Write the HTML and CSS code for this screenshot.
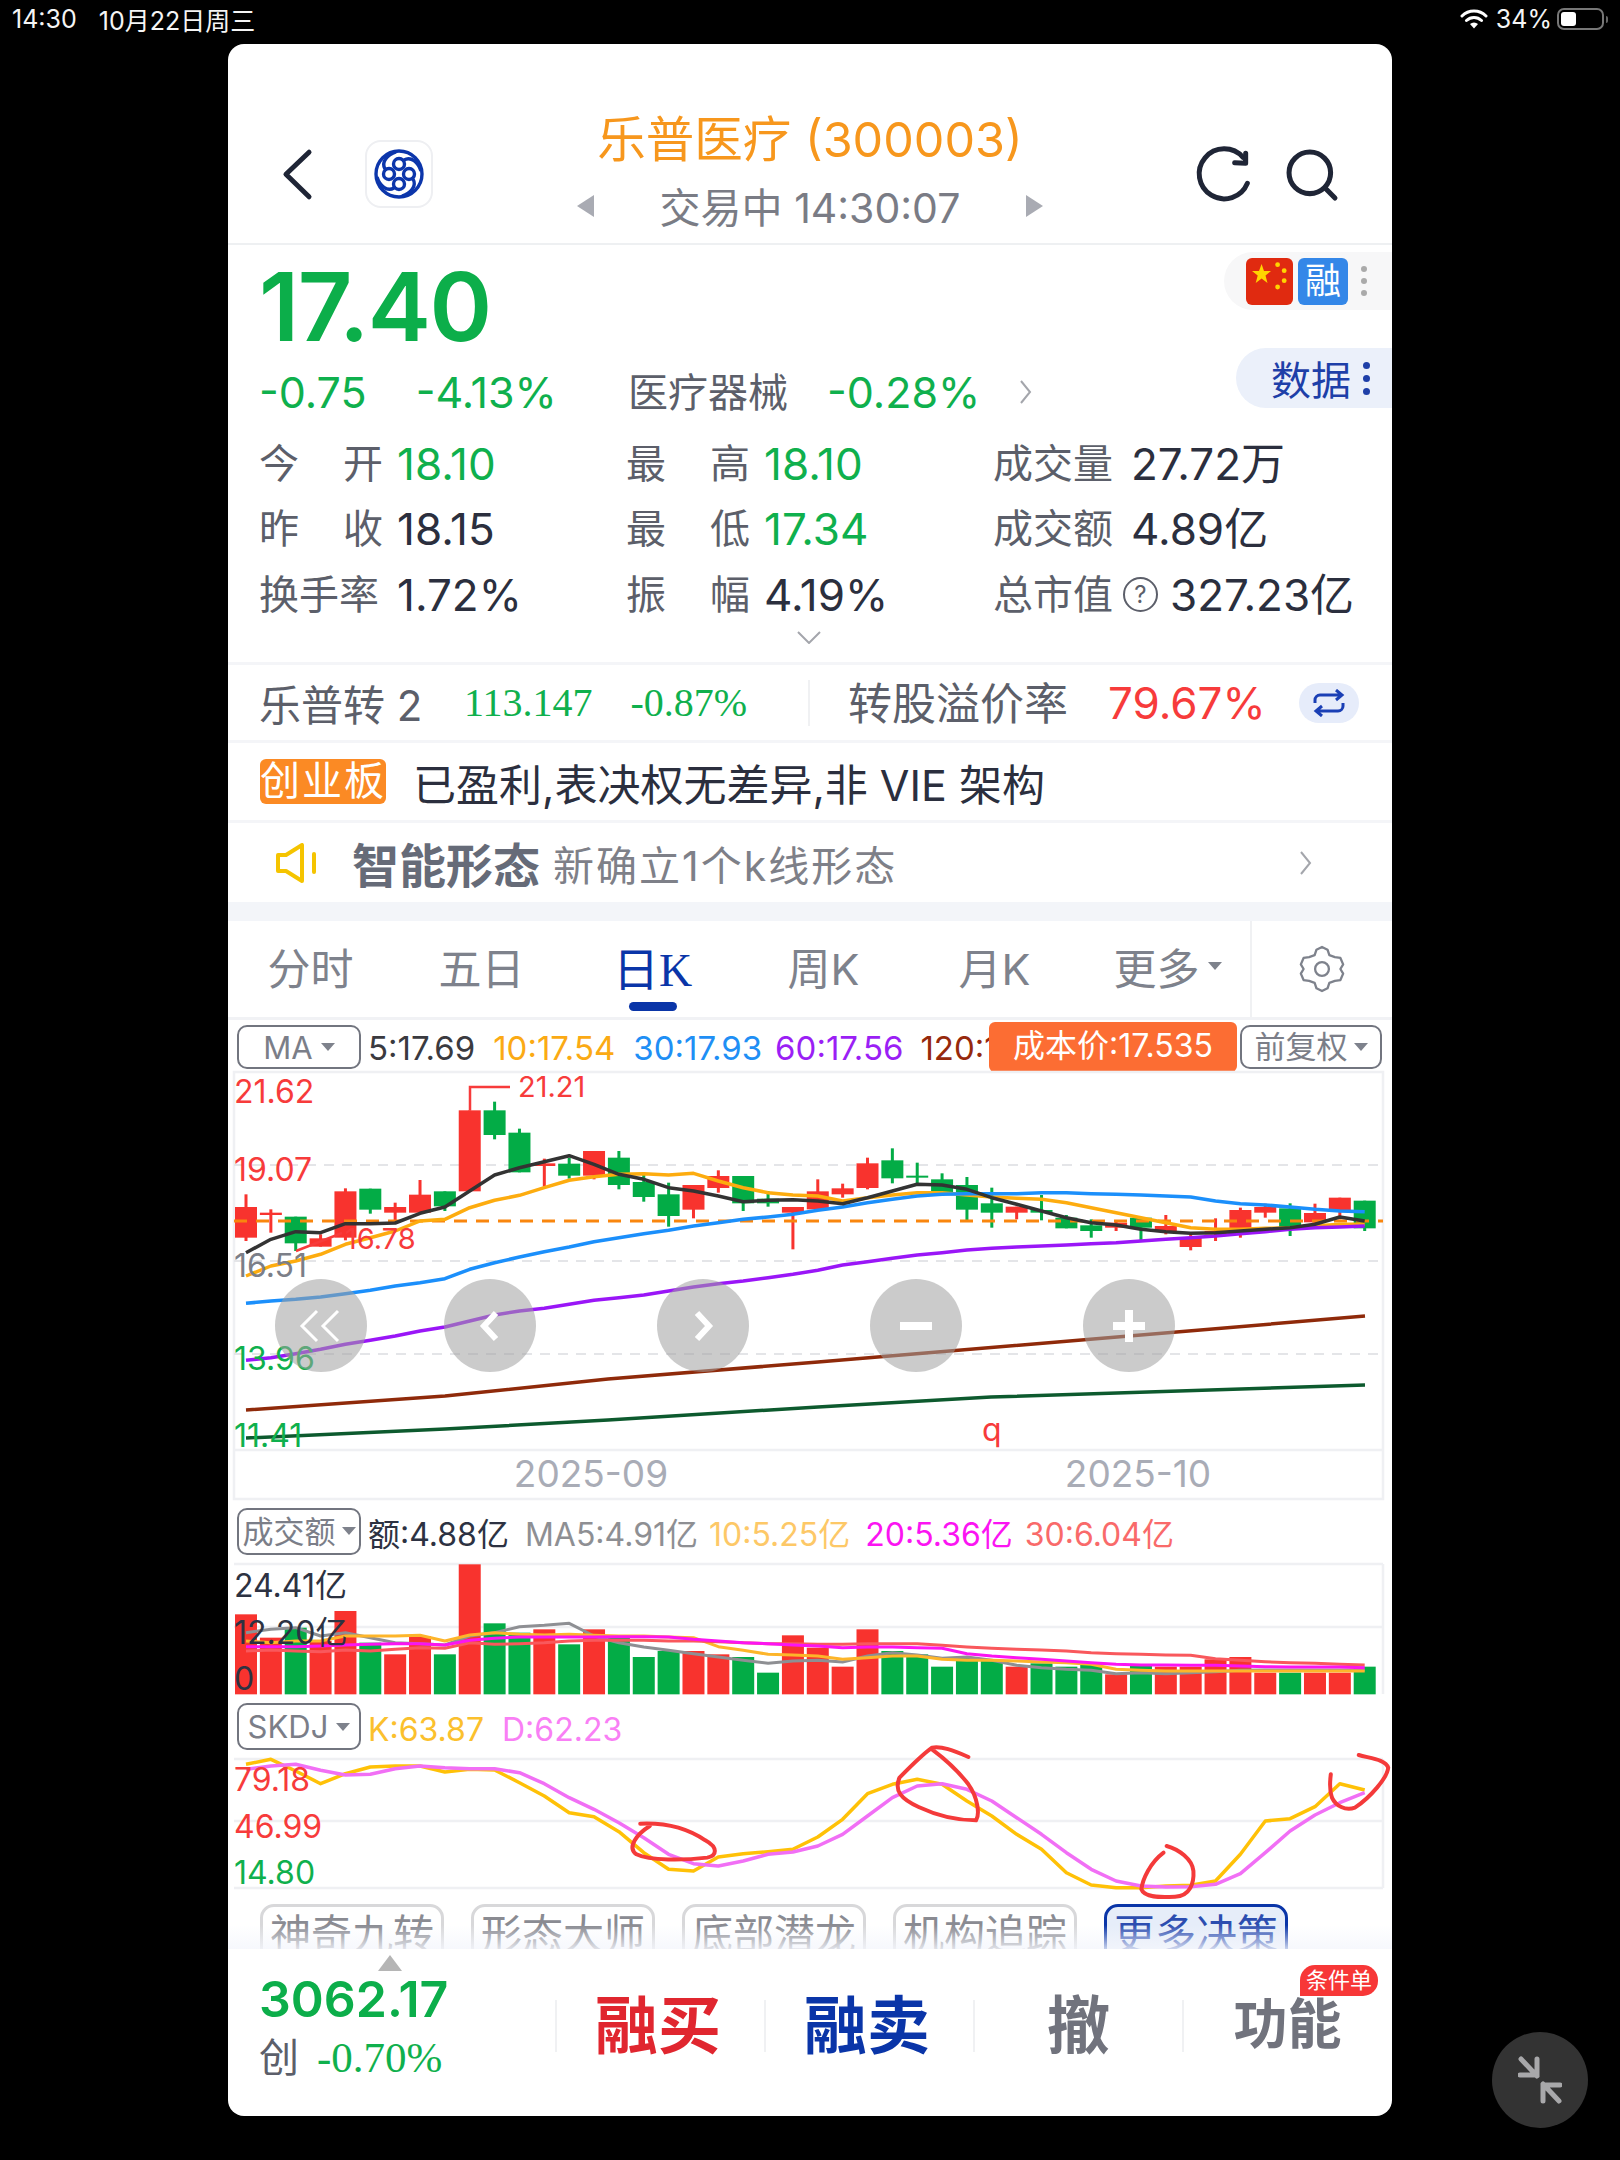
FILE: index.html
```html
<!DOCTYPE html>
<html lang="zh-CN">
	<head>
		<meta charset="utf-8">
		<title>乐普医疗 (300003)</title>
		<link rel="stylesheet" href="styles.css">
	</head>

	<body>
		<div class="status">
			<span class="status-time">14:30</span>
			<span class="status-date">10月22日周三</span>
			<span class="status-right">
				<svg class="wifi" viewBox="0 0 28 20" width="28" height="20">
					<path d="M2 7a17 17 0 0 1 24 0M6.5 11.5a11 11 0 0 1 15 0" fill="none" stroke="#fff" stroke-width="3" stroke-linecap="round"/>
					<path d="M10 15a6 6 0 0 1 8 0l-4 4.500z" fill="#fff"/>
				</svg>
				<span>34%</span>
				<span class="battery"><span class="battery-level"></span></span>
				<span class="battery-nub"></span>
			</span>
		</div>

		<div class="card">
			<div class="header">
				<div class="header-left">
					<svg viewBox="30 50 100 165" width="33" height="55">
						<path d="M118 65L48 132L118 200" fill="none" stroke="#1f2536" stroke-width="15" stroke-linecap="round" stroke-linejoin="round"/>
					</svg>
					<div class="logo">
						<svg viewBox="-26 -26 52 52" width="52" height="52">
							<g fill="none" stroke="#0c36ab" stroke-width="3.400">
								<circle r="23"/>
								<circle cy="-10" r="5.500"/>
								<circle cy="10" r="5.500"/>
								<circle cx="-10" r="5.500"/>
								<circle cx="10" r="5.500"/>
								<path d="M5 -14C12 -18 19 -12 22 -3"/>
								<path d="M14 5C18 12 12 19 3 22"/>
								<path d="M-5 14C-12 18 -19 12 -22 3"/>
								<path d="M-14 -5C-18 -12 -12 -19 -3 -22"/>
							</g>
						</svg>
					</div>
				</div>
				<div class="header-mid">
					<div class="title">乐普医疗 (300003)</div>
					<div class="sub">
						<span class="tri tri-left"></span>
						<span>交易中 14:30:07</span>
						<span class="tri tri-right"></span>
					</div>
				</div>
				<div class="header-right">
					<svg viewBox="40 40 180 180" width="60" height="60">
						<path d="M190 80A75 75 0 1 0 203 158" fill="none" stroke="#1f2536" stroke-width="15" stroke-linecap="round"/>
						<path d="M198 68V98L165 96" fill="none" stroke="#1f2536" stroke-width="15" stroke-linecap="round" stroke-linejoin="round"/>
					</svg>
					<svg viewBox="310 45 170 170" width="57" height="57">
						<circle cx="390" cy="125" r="62" fill="none" stroke="#1f2536" stroke-width="15"/>
						<path d="M437 172L465 200" stroke="#1f2536" stroke-width="15" stroke-linecap="round"/>
					</svg>
				</div>
			</div>

			<div class="quote">
				<div class="badges">
					<svg class="flag" viewBox="0 0 47 47" width="47" height="47">
						<rect width="47" height="47" rx="6" fill="#e02a10"/>
						<polygon points="15.600,6 18,13 25,13 19.500,17.500 21.500,25 15.600,20.500 9.700,25 11.700,17.500 6,13 13,13" fill="#ffd400"/>
						<circle cx="31.600" cy="6.700" r="2.400" fill="#ffd400"/>
						<circle cx="38.200" cy="12.700" r="2.400" fill="#ffd400"/>
						<circle cx="38.200" cy="22.700" r="2.400" fill="#ffd400"/>
						<circle cx="31.600" cy="29" r="2.400" fill="#ffd400"/>
					</svg>
					<span class="rong">融</span>
					<span class="dots"><i></i><i></i><i></i></span>
				</div>
				<div class="data-btn">数据<span class="dots dots-blue"><i></i><i></i><i></i></span></div>

				<div class="price">17.40</div>
				<div class="change">
					<div class="change-left">
						<span class="up">-0.75</span>
						<span class="up">-4.13%</span>
					</div>
					<span class="label">医疗器械</span>
					<span class="up">-0.28%</span>
					<svg viewBox="0 0 13 26" width="13" height="26">
						<path d="M2 2L11 13L2 24" fill="none" stroke="#a4a6ac" stroke-width="2"/>
					</svg>
				</div>

				<div class="stats">
					<div class="stat"><span class="stat-name"><b>今</b><b>开</b></span><span class="up">18.10</span></div>
					<div class="stat"><span class="stat-name"><b>最</b><b>高</b></span><span class="up">18.10</span></div>
					<div class="stat"><span class="stat-name"><b>成交量</b></span><span>27.72万</span></div>
					<div class="stat"><span class="stat-name"><b>昨</b><b>收</b></span><span>18.15</span></div>
					<div class="stat"><span class="stat-name"><b>最</b><b>低</b></span><span class="up">17.34</span></div>
					<div class="stat"><span class="stat-name"><b>成交额</b></span><span>4.89亿</span></div>
					<div class="stat"><span class="stat-name"><b>换手率</b></span><span>1.72%</span></div>
					<div class="stat"><span class="stat-name"><b>振</b><b>幅</b></span><span>4.19%</span></div>
					<div class="stat"><span class="stat-name"><b>总市值</b></span><span class="help">?</span><span>327.23亿</span></div>
				</div>
				<svg class="more" viewBox="0 0 24 13" width="24" height="13">
					<path d="M1 1L12 12L23 1" fill="none" stroke="#a4a6ac" stroke-width="2"/>
				</svg>
			</div>

			<div class="row bond">
				<div class="bond-left">
					<span class="bond-name">乐普转 2</span>
					<span class="serif up">113.147</span>
					<span class="serif up">-0.87%</span>
				</div>
				<div class="bond-right">
					<span class="bond-rate">转股溢价率</span>
					<span class="down">79.67%</span>
					<span class="sync">
						<svg viewBox="0 0 36 28" width="36" height="28">
							<path d="M4 14V11a5 5 0 0 1 5-5H30M25 1L31 6L25 11M32 14V17a5 5 0 0 1-5 5H6M11 17L5 22L11 27" fill="none" stroke="#1a3fb5" stroke-width="3"/>
						</svg>
					</span>
				</div>
			</div>

			<div class="row tagline">
				<span class="tag">创业板</span>
				<span>已盈利,表决权无差异,非 VIE 架构</span>
			</div>

			<div class="row smart">
				<svg viewBox="0 0 42 40" width="42" height="40">
					<path d="M3 12H11L27 2V38L11 28H3z" fill="none" stroke="#f5c400" stroke-width="4" stroke-linejoin="round"/>
					<path d="M39 11V29" stroke="#f5c400" stroke-width="4" stroke-linecap="round"/>
				</svg>
				<span class="smart-title">智能形态</span>
				<span class="smart-text">新确立1个k线形态</span>
				<svg class="smart-arrow" viewBox="0 0 13 26" width="13" height="26">
					<path d="M2 2L11 13L2 24" fill="none" stroke="#a4a6ac" stroke-width="2"/>
				</svg>
			</div>

			<div class="band"></div>

			<div class="tabs">
				<span class="tab">分时</span>
				<span class="tab">五日</span>
				<span class="tab tab-on">日K</span>
				<span class="tab">周K</span>
				<span class="tab">月K</span>
				<span class="tab tab-more">更多<i class="caret"></i></span>
				<span class="gear">
					<svg viewBox="-25 -26 50 52" width="46" height="48">
						<path d="M-6 -21L0 -24L6 -21L8 -15L14 -13L20 -12L23 -5L20 0L23 5L20 12L14 13L8 15L6 21L0 24L-6 21L-8 15L-14 13L-20 12L-23 5L-20 0L-23 -5L-20 -12L-14 -13L-8 -15z" fill="none" stroke="#7e828c" stroke-width="2.500" stroke-linejoin="round"/>
						<circle r="7.500" fill="none" stroke="#7e828c" stroke-width="2.500"/>
					</svg>
				</span>
			</div>

			<div class="legend legend-main">
				<span class="select">MA<i class="caret"></i></span>
				<span class="ma5">5:17.69</span>
				<span class="ma10">10:17.54</span>
				<span class="ma30">30:17.93</span>
				<span class="ma60">60:17.56</span>
				<span class="ma120">120:1</span>
				<span class="cost">成本价:17.535</span>
				<span class="select select-cjk select-right">前复权<i class="caret"></i></span>
			</div>

			<div class="pane">
				<svg class="chart" viewBox="228 1071 1164 429" width="1164" height="429">
					<path class="frame" d="M234 1071H1383V1498H234zM234 1449H1383"/>
					<path class="grid" d="M234 1164H1383M234 1260H1383M234 1353H1383"/>
					<g id="candles"></g>
					<path class="cost-line" d="M234 1220H1383"/>
					<path class="mark" d="M470 1109V1086H510M296 1250L342 1232"/>
					<g id="ma-lines"></g>
					<polyline class="line" stroke="#8f2a0a" points="246,1409 445,1395 608,1378 818,1361 1129,1335 1365,1315"/>
					<polyline class="line" stroke="#0d5a2e" points="246,1437 445,1428 608,1419 818,1406 991,1396 1365,1384"/>
					<text class="axis red" x="234" y="1102">21.62</text>
					<text class="axis red" x="234" y="1180">19.07</text>
					<text class="axis gray" x="234" y="1276">16.51</text>
					<text class="axis green" x="234" y="1369">13.96</text>
					<text class="axis green" x="234" y="1446">11.41</text>
					<text class="axis-small red" x="518" y="1096">21.21</text>
					<text class="axis-small red" x="345" y="1248">16.78</text>
					<text class="axis red" x="982" y="1440">q</text>
					<text class="time" x="591" y="1486">2025-09</text>
					<text class="time" x="1138" y="1486">2025-10</text>
				</svg>
				<div class="nav">
					<span class="nav-btn nav-first">
						<svg viewBox="0 0 44 36" width="44" height="36"><path d="M18 3L3 18L18 33M39 3L24 18L39 33" fill="none" stroke="#fff" stroke-width="3"/></svg>
					</span>
					<span class="nav-btn">
						<svg viewBox="0 0 24 36" width="24" height="36"><path d="M18 5L6 18L18 31" fill="none" stroke="#fff" stroke-width="6"/></svg>
					</span>
					<span class="nav-btn">
						<svg viewBox="0 0 24 36" width="24" height="36"><path d="M6 5L18 18L6 31" fill="none" stroke="#fff" stroke-width="6"/></svg>
					</span>
					<span class="nav-btn">
						<svg viewBox="0 0 32 32" width="32" height="32"><path d="M0 16H32" stroke="#fff" stroke-width="8"/></svg>
					</span>
					<span class="nav-btn">
						<svg viewBox="0 0 32 32" width="32" height="32"><path d="M0 16H32M16 0V32" stroke="#fff" stroke-width="8"/></svg>
					</span>
				</div>
			</div>

			<div class="legend legend-sub">
				<span class="select select-cjk">成交额<i class="caret"></i></span>
				<span class="v-now">额:4.88亿</span>
				<span class="v5">MA5:4.91亿</span>
				<span class="v10">10:5.25亿</span>
				<span class="v20">20:5.36亿</span>
				<span class="v30">30:6.04亿</span>
			</div>

			<svg class="chart" viewBox="228 1561 1164 134" width="1164" height="134">
				<path class="frame" d="M234 1563H1383M234 1626H1383M1383 1563V1693"/>
				<g id="volume"></g>
				<g id="vol-lines"></g>
				<text class="axis dark" x="234" y="1596">24.41亿</text>
				<text class="axis dark" x="234" y="1643">12.20亿</text>
				<text class="axis dark" x="234" y="1689">0</text>
			</svg>

			<div class="legend legend-sub">
				<span class="select">SKDJ<i class="caret"></i></span>
				<span class="kdj-k">K:63.87</span>
				<span class="kdj-d">D:62.23</span>
			</div>

			<svg class="chart" viewBox="228 1756 1164 139" width="1164" height="139">
				<path class="frame" d="M234 1758H1383M234 1820H1383M234 1887H1383M1383 1758V1887"/>
				<g id="kdj"></g>
				<text class="axis red" x="234" y="1790">79.18</text>
				<text class="axis red" x="234" y="1837">46.99</text>
				<text class="axis green" x="234" y="1883">14.80</text>
				<g transform="translate(225 1500) scale(.3827 .3333)">
					<path class="scribble" d="M1085 968C1140 965 1200 975 1255 1018C1290 1040 1285 1065 1260 1070C1200 1078 1110 1080 1075 1060C1050 1040 1075 1000 1110 975"/>
				</g>
				<g transform="translate(800 1500) scale(.3827 .3333)">
					<path class="scribble" d="M440 768C400 748 370 735 345 740C320 760 290 795 260 830C245 870 265 895 310 918C360 945 410 958 460 958C470 940 465 890 440 850C410 805 380 775 345 745"/>
					<path class="scribble" d="M958 1035C990 1045 1025 1075 1028 1110C1030 1145 1020 1185 980 1187C940 1190 900 1190 892 1165C895 1135 915 1085 950 1055"/>
					<path class="scribble" d="M1460 762C1490 772 1530 775 1537 800C1535 830 1490 890 1450 920C1425 930 1400 915 1390 890C1382 865 1385 840 1387 820"/>
				</g>
			</svg>

			<div class="chips">
				<span class="chip">神奇九转</span>
				<span class="chip">形态大师</span>
				<span class="chip">底部潜龙</span>
				<span class="chip">机构追踪</span>
				<span class="chip chip-on">更多决策</span>
			</div>

			<div class="footer">
				<div class="index">
					<span class="index-tri"></span>
					<div class="index-value">3062.17</div>
					<div class="index-change"><span>创</span><span class="serif up">-0.70%</span></div>
				</div>
				<div class="action act-buy">融买</div>
				<div class="action act-sell">融卖</div>
				<div class="action act-undo">撤</div>
				<div class="action act-func">功能<span class="order-badge">条件单</span></div>
			</div>
		</div>

		<div class="float-btn">
			<svg viewBox="0 0 44 48" width="44" height="48">
				<path d="M3 3L19 20M2 19H19V3M41 45L25 28M42 29H25V45" fill="none" stroke="#a8a8aa" stroke-width="5" stroke-linecap="round" stroke-linejoin="round"/>
			</svg>
		</div>

		<script src="chart.js"></script>
	</body>
</html>
```

FILE: styles.css
```css
/* general styling */
* {
	box-sizing: border-box;
	margin: 0;
	padding: 0;
}

html, body {
	background: #000;
	height: 2160px;
	overflow: hidden;
}

body {
	color: #2b2f3e;
	font-family: Inter, "Noto Sans CJK SC", sans-serif;
	font-size: 40px;
	position: relative;
	width: 1620px;
}

i {
	font-style: normal;
}

.up { color: #0fb04d; }
.down { color: #f73b3b; }
.serif { font-family: "Liberation Serif", "Noto Sans CJK SC", serif; }

/* status bar */
.status {
	align-items: center;
	color: #f5f5f5;
	display: flex;
	font-size: 25px;
	height: 38px;
	padding: 0 12px;
}

.status-date {
	margin-left: 22px;
}

.status-right {
	align-items: center;
	display: flex;
	margin-left: auto;
}

.status-right .wifi {
	margin-right: 8px;
}

.battery {
	border: 2px solid #777;
	border-radius: 7px;
	display: block;
	height: 22px;
	margin-left: 5px;
	padding: 2px;
	width: 47px;
}

.battery-level {
	background: #fff;
	border-radius: 3px;
	display: block;
	height: 14px;
	width: 15px;
}

.battery-nub {
	background: #666;
	border-radius: 0 2px 2px 0;
	display: block;
	height: 7px;
	margin-left: 2px;
	width: 2px;
}

/* white app window */
.card {
	background: #fff;
	border-radius: 16px;
	height: 2072px;
	margin: 6px 0 0 228px;
	overflow: hidden;
	position: relative;
	width: 1164px;
}

.header {
	border-bottom: 2px solid #eef0f2;
	display: grid;
	grid-template-columns: 1fr auto 1fr;
	height: 201px;
	padding: 68px 52px 0;
}

.header-left {
	align-items: center;
	display: flex;
	gap: 52px;
	height: 124px;
	margin-left: 0;
}

.logo {
	align-items: center;
	border: 2px solid #eeeff2;
	border-radius: 16px;
	display: flex;
	height: 68px;
	justify-content: center;
	width: 68px;
}

.header-mid {
	text-align: center;
}

.title {
	color: #f7971d;
	font-size: 48.500px;
	line-height: 56px;
}

.sub {
	align-items: center;
	color: #7a7c85;
	display: flex;
	font-size: 41px;
	gap: 66px;
	height: 54px;
	justify-content: center;
	margin-top: 10px;
}

.tri {
	border-bottom: 11px solid transparent;
	border-top: 11px solid transparent;
	display: block;
	margin-top: 2px;
}

.tri-left { border-right: 17px solid #a9abb3; }
.tri-right { border-left: 17px solid #a9abb3; }

.header-right {
	align-items: center;
	display: flex;
	gap: 30px;
	height: 124px;
	justify-content: flex-end;
}

/* quote block */
.quote {
	border-bottom: 3px solid #f4f5f8;
	height: 420px;
	padding: 14px 0 0 31px;
	position: relative;
}

.price {
	color: #0cae4a;
	font-size: 95px;
	font-weight: 600;
	letter-spacing: -1.500px;
	line-height: 96px;
}

.change {
	align-items: center;
	display: flex;
	font-size: 43px;
	gap: 39px;
	height: 50px;
	margin-top: 12px;
}

.change-left {
	display: flex;
	gap: 49px;
	margin-right: -39px;
	width: 369px;
}

.label {
	color: #5c5f6a;
	font-size: 40px;
	padding-bottom: 4px;
}

.stats {
	display: grid;
	grid-auto-rows: 65.500px;
	grid-template-columns: 367px 367px auto;
	margin-top: 14px;
}

.stat {
	align-items: center;
	display: flex;
	font-size: 44px;
	gap: 14px;
	line-height: 50px;
	white-space: nowrap;
}

.stat-name {
	color: #5c5f6a;
	display: flex;
	font-size: 40px;
	justify-content: space-between;
	width: 124px;
}

.stat-name b {
	font-weight: 400;
}

.help {
	border: 2px solid #5c5f6a;
	border-radius: 50%;
	color: #5c5f6a;
	font-size: 24px;
	height: 35px;
	line-height: 31px;
	margin: 0 -2px 0 -8px;
	text-align: center;
	width: 35px;
}

.more {
	display: block;
	margin: 3px 0 0 538px;
}

.badges {
	align-items: center;
	background: #f7f7f8;
	border-radius: 29px 0 0 29px;
	display: flex;
	gap: 5px;
	height: 58px;
	padding-left: 22px;
	position: absolute;
	right: 0;
	top: 7px;
	width: 168px;
}

.rong {
	background: #3487e8;
	border-radius: 6px;
	color: #fff;
	font-size: 36px;
	height: 47px;
	line-height: 47px;
	text-align: center;
	width: 50px;
}

.dots {
	display: flex;
	flex-direction: column;
	gap: 6px;
	margin-left: 8px;
}

.dots i {
	background: #aaa;
	border-radius: 50%;
	display: block;
	height: 6px;
	width: 6px;
}

.dots-blue {
	margin-left: 12px;
}

.dots-blue i {
	background: #1e3fa8;
	height: 7px;
	width: 7px;
}

.data-btn {
	align-items: center;
	background: #ebf0fa;
	border-radius: 30px 0 0 30px;
	color: #1e3fa8;
	display: flex;
	height: 60px;
	padding-left: 35px;
	position: absolute;
	right: 0;
	top: 103px;
	width: 156px;
}

/* text rows */
.row {
	align-items: center;
	border-bottom: 3px solid #f4f5f8;
	display: flex;
	padding-left: 31px;
}

.bond {
	height: 78px;
}

.bond-left {
	align-items: center;
	border-right: 2px solid #f0f1f3;
	display: flex;
	flex: none;
	gap: 38px;
	height: 46px;
	width: 551px;
}

.bond-name {
	color: #5c5f6a;
	font-size: 42px;
	width: 167px;
	white-space: nowrap;
}

.bond-left .serif {
	font-size: 40px;
}

.bond-right {
	align-items: center;
	display: flex;
	flex: 1;
	font-size: 44px;
	gap: 40px;
	padding: 0 32px 0 38px;
	white-space: nowrap;
}

.bond-rate {
	color: #5c5f6a;
	font-size: 44px;
	padding-bottom: 3px;
}

.sync {
	align-items: center;
	background: #e6ecfa;
	border-radius: 20px;
	display: flex;
	flex: none;
	height: 40px;
	justify-content: center;
	margin-left: -7px;
	width: 60px;
}

.tagline {
	font-size: 43px;
	gap: 27px;
	height: 80px;
}

.tag {
	background: #fb8a24;
	border-radius: 6px;
	color: #fff;
	font-size: 40px;
	height: 45px;
	letter-spacing: 2px;
	line-height: 43px;
	margin-left: 1px;
	text-align: center;
	width: 126px;
}

.smart {
	border-bottom: 0;
	height: 79px;
	padding-left: 47px;
}

.smart-title {
	color: #666b78;
	font-size: 47px;
	font-weight: 700;
	margin-left: 35px;
}

.smart-text {
	color: #7e8088;
	font-size: 41px;
	letter-spacing: 2px;
	margin-left: 13px;
}

.smart-arrow {
	margin-left: auto;
	margin-right: 80px;
}

.band {
	background: #f3f5f9;
	height: 19px;
}

/* chart tabs */
.tabs {
	align-items: center;
	border-bottom: 3px solid #f1f2f5;
	display: flex;
	height: 99px;
	margin-left: -3px;
}

.tab {
	align-items: center;
	color: #7e828c;
	display: flex;
	font-size: 43px;
	height: 100%;
	justify-content: center;
	padding-bottom: 6px;
	position: relative;
	width: 171px;
}

.tab-more {
	padding-left: 4px;
}

.tab-on {
	color: #0a35a8;
	font-family: "Liberation Serif", "Noto Sans CJK SC", serif;
	font-size: 46px;
}

.tab-on::after {
	background: #0a35a8;
	border-radius: 5px;
	bottom: 6px;
	content: "";
	height: 9px;
	position: absolute;
	width: 48px;
}

.caret {
	border-left: 7px solid transparent;
	border-right: 7px solid transparent;
	border-top: 8px solid #7e828c;
	display: block;
	margin-left: 8px;
}

.gear {
	align-items: center;
	border-left: 2px solid #f0f1f3;
	display: flex;
	flex: 1;
	height: 100%;
	justify-content: center;
	margin-left: -1px;
}

/* legends above each pane */
.legend {
	align-items: flex-start;
	display: flex;
	font-size: 33px;
	gap: 18px;
	padding: 5px 10px 0 9px;
	position: relative;
	white-space: nowrap;
}

.legend span:not(.select):not(.cost) {
	line-height: 46px;
}

.legend-main { height: 52px; }
.legend-sub { font-size: 32px; gap: 16px; height: 61px; padding-top: 7px; }
.legend-sub span:not(.select) { margin-top: 4px; }

.select {
	align-items: center;
	border: 2px solid #72757f;
	border-radius: 10px;
	color: #7b7e88;
	display: flex;
	font-size: 31px;
	height: 44px;
	justify-content: center;
	margin-right: -11px;
	width: 124px;
}

.legend-sub .select {
	height: 47px;
	margin-right: -9px;
}

.select-cjk {
	padding-bottom: 5px;
}

.select-cjk .caret {
	margin-left: 6px;
	margin-top: 4px;
}

.select-right {
	margin-left: auto;
	margin-right: 0;
	width: 142px;
}

.ma5 { color: #3a3a3f; }
.ma10 { color: #fbaa14; }
.ma30 { color: #1f8ff5; }
.ma60 { color: #9b1ff5; margin-left: -5px; }
.ma120 { color: #96290c; margin-left: -1px; }

.cost {
	background: #fc6d33;
	border-radius: 6px;
	color: #fff;
	font-size: 32px;
	height: 50px;
	left: 761px;
	line-height: 48px;
	position: absolute;
	text-align: center;
	top: 2px;
	width: 248px;
}

.v-now { color: #2d3242; }
.v5 { color: #8e8f93; }
.v10 { color: #fdc867; margin-left: -5px; }
.v20 { color: #fb14f2; margin-left: -1px; }
.v30 { color: #f96a6a; margin-left: -4px; }
.kdj-k { color: #fbc02d; }
.kdj-d { color: #f97ff5; margin-left: 2px; }

/* charts, drawn in page coordinates */
.chart {
	display: block;
	overflow: visible;
}

.pane {
	position: relative;
}

.frame {
	fill: none;
	stroke: #eff0f3;
	stroke-width: 2.500;
}

.grid {
	fill: none;
	stroke: #e4e5e8;
	stroke-dasharray: 10 8;
	stroke-width: 2;
}

.cost-line {
	fill: none;
	stroke: #f9860e;
	stroke-dasharray: 13 9;
	stroke-width: 3;
}

.mark {
	fill: none;
	stroke: #f73b3b;
	stroke-width: 2.500;
}

.line {
	fill: none;
	stroke-linejoin: round;
	stroke-width: 3.500;
}

.axis {
	font-size: 32px;
}

.axis-small {
	font-size: 29px;
}

.red { fill: #f73b3b; }
.green { fill: #0fb04d; }
.gray { fill: #7c7f88; }
.dark { fill: #2d3242; }

.time {
	fill: #a9acb6;
	font-size: 37px;
	text-anchor: middle;
}

.scribble {
	fill: none;
	stroke: #f43a3a;
	stroke-linecap: round;
	stroke-linejoin: round;
	stroke-width: 4;
	vector-effect: non-scaling-stroke;
}

.nav {
	display: flex;
	gap: 121px;
	left: 47px;
	position: absolute;
	top: 207px;
}

.nav-btn {
	align-items: center;
	background: rgba(160, 160, 160, .55);
	border-radius: 50%;
	display: flex;
	height: 93px;
	justify-content: center;
	width: 92px;
}

.nav-first {
	margin-right: -44px;
}

/* decision chips, cut off by the footer */
.chips {
	display: flex;
	gap: 27px;
	height: 53px;
	overflow: hidden;
	padding: 8px 0 0 32px;
	position: relative;
}

.chips::after {
	background: linear-gradient(rgba(244, 246, 252, 0), rgba(244, 246, 252, .8));
	bottom: 0;
	content: "";
	height: 24px;
	left: 0;
	position: absolute;
	right: 0;
}

.chip {
	border: 3px solid #d8d8da;
	border-radius: 14px;
	color: #8a8b92;
	flex: none;
	font-size: 41px;
	height: 72px;
	line-height: 54px;
	text-align: center;
	width: 184px;
}

.chip-on {
	background: #e6edf9;
	border-color: #0a35a8;
	color: #2c4db0;
}

/* bottom bar */
.footer {
	align-items: center;
	display: flex;
	height: 168px;
	position: relative;
}

.index {
	align-self: flex-start;
	color: #5c5f6a;
	margin-top: 6px;
	padding-left: 31px;
	width: 327px;
}

.index-tri {
	border-bottom: 16px solid #b5b5b5;
	border-left: 12px solid transparent;
	border-right: 12px solid transparent;
	display: block;
	height: 0;
	margin-left: 119px;
	width: 24px;
}

.index-value {
	color: #0cae4a;
	font-size: 50px;
	font-weight: 600;
	line-height: 50px;
	margin-top: 3px;
}

.index-change {
	display: flex;
	gap: 18px;
	line-height: 56px;
	margin-top: 6px;
}

.index-change .serif {
	font-size: 43px;
}

.action {
	border-left: 2px solid #f0f1f3;
	font-size: 63px;
	font-weight: 700;
	height: 52px;
	line-height: 50px;
	margin-bottom: 14px;
	text-align: center;
	width: 209px;
}

.act-buy { color: #e0262f; padding-right: 5px; }
.act-sell { color: #0a35a8; padding-right: 5px; }
.act-undo { color: #71737d; }
.act-func { color: #71737d; font-size: 54px; }

.order-badge {
	background: #f73737;
	border-radius: 15px 15px 15px 0;
	color: #fff;
	font-size: 22px;
	font-weight: 400;
	height: 31px;
	line-height: 31px;
	position: absolute;
	right: 14px;
	text-align: center;
	top: 16px;
	width: 78px;
}

.float-btn {
	align-items: center;
	background: #333;
	border-radius: 50%;
	display: flex;
	height: 96px;
	justify-content: center;
	left: 1492px;
	position: absolute;
	top: 2032px;
	width: 96px;
}
```

FILE: chart.js
```js
// y values below are on a 3x scale, measured from the top of each pane's ruler
var SVG_NS = "http://www.w3.org/2000/svg";
var BAR_WIDTH = 22;

function barX(i) {
	return 246 + i * 24.86;
}

function draw(parent, tag, attrs) {
	var el = document.createElementNS(SVG_NS, tag);
	for (var key in attrs) {
		el.setAttribute(key, attrs[key]);
	}
	parent.appendChild(el);
}

function drawLine(parent, values, top, color, width) {
	var points = values.map(function (v, i) {
		return barX(i).toFixed(1) + "," + (top + v / 3).toFixed(1);
	});
	draw(parent, "polyline", {
		points: points.join(" "),
		fill: "none",
		stroke: color,
		"stroke-width": width,
		"stroke-linejoin": "round"
	});
}

var RED = "#f8332e";
var GREEN = "#03ac46";

// body top, body bottom, wick top, wick bottom, colour
var candles = [
	[588, 680, 550, 690, "r"], [605, 612, 595, 665, "r"], [617, 697, 617, 720, "g"], [682, 707, 670, 707, "r"],
	[541, 680, 532, 688, "r"], [533, 596, 533, 608, "g"], [588, 605, 575, 630, "r"], [551, 605, 507, 605, "r"],
	[541, 586, 541, 600, "g"], [298, 541, 298, 541, "r"], [298, 372, 272, 385, "g"], [365, 484, 353, 484, "g"],
	[457, 465, 443, 527, "r"], [458, 494, 440, 503, "g"], [420, 494, 420, 505, "r"], [440, 522, 420, 535, "g"],
	[513, 558, 490, 572, "g"], [550, 615, 515, 647, "g"], [522, 596, 522, 622, "r"], [495, 531, 478, 545, "r"],
	[495, 577, 495, 600, "g"], [563, 577, 540, 587, "g"], [588, 605, 588, 715, "r"], [541, 595, 505, 600, "r"],
	[532, 550, 518, 560, "r"], [457, 531, 440, 535, "r"], [448, 502, 412, 517, "g"], [494, 500, 455, 520, "g"],
	[505, 543, 487, 545, "g"], [522, 596, 498, 628, "g"], [577, 605, 530, 650, "g"], [587, 605, 587, 625, "r"],
	[597, 605, 552, 628, "g"], [620, 652, 612, 652, "g"], [643, 660, 625, 680, "g"], [635, 650, 630, 660, "r"],
	[620, 650, 620, 687, "g"], [645, 662, 612, 670, "r"], [680, 708, 670, 718, "r"], [660, 670, 622, 690, "r"],
	[597, 652, 590, 680, "r"], [588, 605, 578, 620, "r"], [592, 652, 577, 675, "g"], [606, 634, 578, 650, "r"],
	[560, 598, 560, 625, "r"], [569, 652, 569, 660, "g"]
];

var candleLayer = document.getElementById("candles");
candles.forEach(function (c, i) {
	var color = c[4] === "r" ? RED : GREEN;
	var x = barX(i);
	draw(candleLayer, "rect", { x: x - 1.5, y: 1010 + c[2] / 3, width: 3, height: (c[3] - c[2]) / 3, fill: color });
	draw(candleLayer, "rect", { x: x - BAR_WIDTH / 2, y: 1010 + c[0] / 3, width: BAR_WIDTH, height: (c[1] - c[0]) / 3, fill: color });
});

var maLayer = document.getElementById("ma-lines");
drawLine(maLayer, [
	795, 765, 750, 730, 700, 680, 660, 630, 625, 590, 568, 553, 530, 508, 497, 490, 488, 492, 487, 510, 530, 545, 552, 555,
	570, 560, 552, 545, 545, 552, 558, 562, 565, 575, 590, 605, 620, 635, 650, 655, 655, 652, 650, 645, 640, 640
], 1010, "#fdac0f", 3.5);
drawLine(maLayer, [
	877, 870, 865, 858, 848, 838, 825, 815, 803, 775, 755, 738, 722, 708, 692, 680, 668, 658, 645, 635, 625, 618, 610, 598,
	588, 575, 565, 555, 550, 548, 548, 548, 545, 545, 548, 550, 552, 555, 558, 570, 578, 582, 588, 595, 600, 602
], 1010, "#1b8ffb", 3.5);
drawLine(maLayer, [
	1048, 1040, 1028, 1015, 1000, 988, 975, 960, 948, 930, 912, 900, 892, 880, 868, 860, 852, 840, 828, 818, 810, 800, 790, 778,
	762, 752, 742, 732, 725, 717, 712, 708, 705, 702, 698, 695, 690, 685, 680, 675, 668, 662, 655, 650, 648, 645
], 1010, "#9a16f7", 3.5);
drawLine(maLayer, [
	725, 685, 662, 665, 638, 638, 636, 607, 588, 540, 492, 470, 452, 434, 460, 490, 505, 530, 540, 555, 572, 568, 566, 570,
	578, 560, 540, 520, 522, 535, 560, 580, 600, 620, 635, 642, 655, 662, 667, 665, 660, 655, 650, 640, 618, 630
], 1010, "#333", 3.5);

// bar top on the 3x scale and colour, volume pane
var volumes = [
	340, 410, 380, 420, 330, 425, 460, 405, 460, 190, 367, 395, 385, 430, 385, 410, 468, 450, 450, 460, 468, 515, 403, 440,
	497, 385, 450, 460, 497, 468, 478, 497, 487, 497, 490, 520, 492, 497, 497, 475, 468, 515, 515, 515, 515, 497
];
var volumeColors = "rrgrrgrrgrggrgrgggrrggrr" + "rrgggggrgggrgrrrrrgrrg";

var volumeLayer = document.getElementById("volume");
volumes.forEach(function (v, i) {
	draw(volumeLayer, "rect", {
		x: barX(i) - BAR_WIDTH / 2,
		y: 1500 + v / 3,
		width: BAR_WIDTH,
		height: (580 - v) / 3,
		fill: volumeColors[i] === "r" ? RED : GREEN
	});
});

var volLines = document.getElementById("vol-lines");
drawLine(volLines, [
	395, 385, 380, 405, 395, 410, 425, 428, 432, 405, 395, 377, 373, 367, 405, 425, 438, 448, 458, 468, 478, 487, 480, 478,
	483, 465, 455, 462, 472, 468, 478, 493, 500, 505, 508, 518, 515, 518, 515, 512, 508, 507, 507, 507, 507, 507
], 1500, "#8e8f93", 3);
drawLine(volLines, [
	420, 425, 420, 420, 405, 405, 405, 403, 420, 402, 395, 400, 402, 400, 403, 405, 405, 408, 410, 437, 448, 460, 462, 465,
	475, 470, 465, 465, 475, 478, 478, 480, 483, 485, 490, 505, 508, 510, 510, 510, 510, 510, 510, 510, 510, 510
], 1500, "#fdb52a", 3);
drawLine(volLines, [
	450, 447, 450, 452, 447, 450, 445, 440, 442, 425, 430, 428, 425, 420, 418, 418, 418, 420, 420, 422, 425, 428, 428, 430,
	430, 428, 428, 428, 433, 438, 442, 445, 447, 450, 455, 458, 460, 462, 463, 473, 478, 482, 485, 487, 490, 492
], 1500, "#f9585c", 3);
drawLine(volLines, [
	437, 437, 437, 435, 432, 430, 428, 428, 432, 418, 412, 408, 408, 408, 408, 407, 407, 408, 415, 420, 425, 428, 432, 435,
	440, 438, 438, 440, 442, 458, 465, 470, 475, 480, 485, 490, 492, 492, 493, 493, 495, 497, 498, 498, 498, 500
], 1500, "#fb14f2", 3);

var kdjLayer = document.getElementById("kdj");
drawLine(kdjLayer, [
	790, 775, 810, 848, 818, 798, 795, 795, 813, 805, 807, 845, 885, 935, 947, 992, 1055, 1105, 1110, 1068, 1058, 1052, 1045, 1008,
	955, 878, 850, 835, 850, 900, 945, 1000, 1045, 1115, 1152, 1160, 1160, 1155, 1153, 1140, 1060, 960, 953, 917, 848, 867
], 1500, "#ffc107", 3.5);
drawLine(kdjLayer, [
	805, 795, 790, 808, 822, 820, 803, 795, 800, 803, 803, 815, 848, 890, 925, 965, 1010, 1060, 1088, 1095, 1080, 1060, 1053, 1035,
	1000, 945, 890, 855, 848, 865, 900, 950, 1000, 1055, 1105, 1140, 1155, 1158, 1157, 1150, 1118, 1055, 990, 942, 905, 875
], 1500, "#f16ff5", 3.5);
```
